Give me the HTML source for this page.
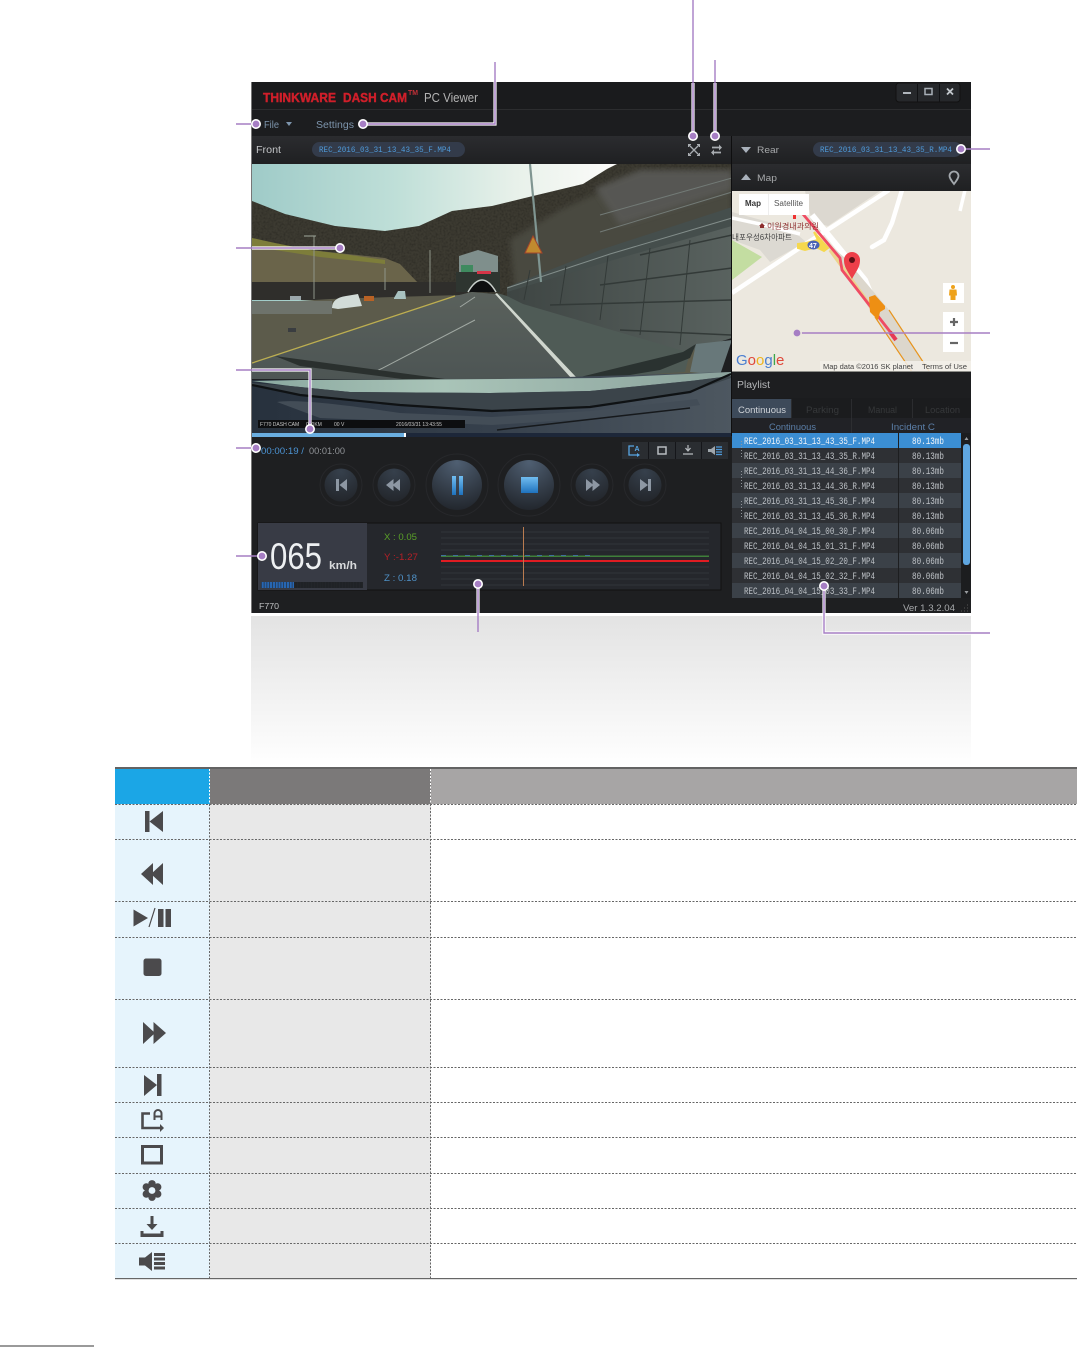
<!DOCTYPE html>
<html><head><meta charset="utf-8"><style>
html,body{margin:0;padding:0;background:#fff;width:1077px;height:1347px;overflow:hidden}
svg{display:block}
text{font-family:"Liberation Sans","Noto Sans CJK KR",sans-serif}
text.m,.m text{font-family:"Liberation Mono",monospace}
</style></head><body>
<svg width="1077" height="1347" viewBox="0 0 1077 1347" xmlns="http://www.w3.org/2000/svg">
<defs>
<linearGradient id="fade" x1="0" y1="0" x2="0" y2="1"><stop offset="0" stop-color="#e3e3e3"/><stop offset="1" stop-color="#fff"/></linearGradient>
<linearGradient id="sky" x1="0" y1="0" x2="1" y2="0"><stop offset="0" stop-color="#9fcbc8"/><stop offset=".3" stop-color="#bfdfd8"/><stop offset=".55" stop-color="#e8f1ea"/><stop offset=".75" stop-color="#fbfbf9"/><stop offset="1" stop-color="#fcfcfb"/></linearGradient>
<linearGradient id="wall" x1="0" y1="0" x2="1" y2="0"><stop offset="0" stop-color="#3e4543"/><stop offset="1" stop-color="#59625f"/></linearGradient>
<linearGradient id="road" x1="0" y1="0" x2="0" y2="1"><stop offset="0" stop-color="#5a615c"/><stop offset="1" stop-color="#4d5554"/></linearGradient>
<linearGradient id="dash" x1="0" y1="0" x2="1" y2="0"><stop offset="0" stop-color="#8aa89f"/><stop offset=".4" stop-color="#a9c4b8"/><stop offset="1" stop-color="#8ba29c"/></linearGradient>
<linearGradient id="dash2" x1="0" y1="0" x2="1" y2="0"><stop offset="0" stop-color="#27313d"/><stop offset=".5" stop-color="#36404c"/><stop offset="1" stop-color="#4d5760"/></linearGradient>
<linearGradient id="hdr" x1="0" y1="0" x2="0" y2="1"><stop offset="0" stop-color="#2b2c2f"/><stop offset="1" stop-color="#1f2022"/></linearGradient>
<radialGradient id="btn" cx=".5" cy=".1" r=".95"><stop offset="0" stop-color="#36404c"/><stop offset="1" stop-color="#22252a"/></radialGradient>
<radialGradient id="bbtn" cx=".5" cy=".05" r="1"><stop offset="0" stop-color="#4f5f72"/><stop offset="1" stop-color="#20242a"/></radialGradient>
<linearGradient id="blu" x1="0" y1="0" x2="0" y2="1"><stop offset="0" stop-color="#71bdf0"/><stop offset="1" stop-color="#1f72bd"/></linearGradient>
<filter id="noise" x="0" y="0" width="100%" height="100%"><feTurbulence type="fractalNoise" baseFrequency=".5" numOctaves="2" seed="4"/><feColorMatrix values="0 0 0 0 0  0 0 0 0 0  0 0 0 0 0  0 0 0 1.6 -.65"/><feComposite in2="SourceAlpha" operator="in"/></filter>
<filter id="soft" x="-5%" y="-5%" width="110%" height="110%"><feGaussianBlur stdDeviation="3"/></filter>
</defs>

<!-- fade area -->
<rect x="251" y="616" width="720" height="151" fill="url(#fade)"/>

<!-- window -->
<rect x="252" y="82" width="719" height="531" fill="#1e1f21"/>
<rect x="252" y="82" width="719" height="28" fill="#1a1b1d"/>
<rect x="252" y="109" width="719" height="1" fill="#2c2d2f"/>
<rect x="252" y="110" width="719" height="26" fill="#1c1d1f"/>
<rect x="252" y="136" width="479" height="28" fill="url(#hdr)"/>
<rect x="732" y="136" width="239" height="28" fill="url(#hdr)"/>
<rect x="732" y="164" width="239" height="27" fill="url(#hdr)"/>
<rect x="731" y="136" width="1" height="300" fill="#0e0e0f"/>
<g font-size="13" font-weight="700" fill="#d01f2a" stroke="#d01f2a" stroke-width=".4">
<text x="263" y="102" textLength="73" lengthAdjust="spacingAndGlyphs">THINKWARE</text>
<text x="343" y="102" textLength="64" lengthAdjust="spacingAndGlyphs">DASH CAM</text>
</g>
<text x="408" y="95" font-size="7" font-weight="700" fill="#c23038" textLength="10" lengthAdjust="spacingAndGlyphs">TM</text>
<text x="424" y="102" font-size="12.5" fill="#b4b4b4" textLength="54" lengthAdjust="spacingAndGlyphs">PC Viewer</text>
<text x="264" y="128" font-size="10" fill="#7d95ad" textLength="15" lengthAdjust="spacingAndGlyphs">File</text>
<path d="M286 122h6l-3 4z" fill="#7d95ad"/>
<text x="316" y="128" font-size="10" fill="#7d95ad" textLength="38" lengthAdjust="spacingAndGlyphs">Settings</text>

<!-- win btns -->
<rect x="896" y="83" width="64" height="19" rx="3" fill="#26282b" stroke="#111"/>
<path d="M917.500 84v18M939.500 84v18" stroke="#111214"/>
<rect x="903" y="92" width="8" height="2" fill="#b0b6bc"/>
<rect x="925" y="88.500" width="7" height="6" fill="none" stroke="#a9b0b8" stroke-width="1.500"/>
<path d="M947 88.500l6 6m0-6l-6 6" stroke="#c2c7cc" stroke-width="1.800"/>

<!-- front header -->
<text x="256" y="153" font-size="10" fill="#c2c4c6" textLength="25" lengthAdjust="spacingAndGlyphs">Front</text>
<rect x="312" y="142" width="153" height="15" rx="7.500" fill="#333b4a"/>
<text x="319" y="152" class="m" font-size="8.500" fill="#4f9ad9" textLength="132" lengthAdjust="spacingAndGlyphs">REC_2016_03_31_13_43_35_F.MP4</text>
<path d="M689 145l10 10m0-10l-10 10" stroke="#a9adb1" stroke-width="1.300"/>
<path d="M688.500 147v-2.500h2.500M699.500 147v-2.500h-2.500M688.500 153v2.500h2.500M699.500 153v2.500h-2.500" stroke="#a9adb1" stroke-width="1" fill="none"/>
<path d="M712 147.500h8M713 152.500h8" stroke="#a9adb1" stroke-width="1.800"/>
<path d="M719 144.500l3 3-3 3zM714 149.500l-3 3 3 3z" fill="#a9adb1"/>

<!-- video -->
<svg x="252" y="164" width="479" height="269" viewBox="252 164 479 269">
<rect x="252" y="164" width="480" height="150" fill="url(#sky)"/>
<path d="M252 201L285 214L335 226L385 231L419 226L452 211L492 206L533 196L583 184L607 169L617 164H732V300H252Z" fill="#3c3a31"/>
<path d="M252 201L285 214L335 226L385 231L419 226L452 211L492 206L533 196L583 184L607 169L617 164H732V300H252Z" fill="#000" filter="url(#noise)" opacity=".3"/>
<path d="M510 240L560 210L600 192L732 175V215L560 285L515 290Z" fill="#4a4841" filter="url(#soft)"/>
<path d="M595 188L640 170H732V190L620 225Z" fill="#565752" filter="url(#soft)"/>
<path d="M252 241L275 244L310 250L385 258L400 264L420 285L252 285Z" fill="#6a644a"/>
<path d="M252 238L275 243L310 250L350 255L385 260L385 264L320 257L275 250L252 246Z" fill="#7d7d3a"/>
<rect x="252" y="282" width="215" height="18" fill="#2f2e2b"/>
<rect x="470" y="262" width="30" height="30" fill="#333630"/>
<path d="M252 304L330 299L460 295L472 292L700 340V379H252Z" fill="#5c5b4b"/>
<rect x="252" y="301" width="80" height="13" fill="#6e736c"/>
<path d="M252 362L455 296L472 292L495 294L572 379H252Z" fill="url(#road)"/>
<path d="M252 363L455 296" stroke="#bdae50" stroke-width="1.300"/>
<path d="M375 372L475 320M460 307L475 297" stroke="#a0a8a2" stroke-width="1"/>
<path d="M495 294L572 379H578L497 293Z" fill="#cfd6ce"/>
<path d="M497 293L507 296L690 352L685 372L578 379Z" fill="#4f5b56"/>
<path d="M507 296L523 304L687 352L732 338V212L640 248L507 287Z" fill="url(#wall)"/>
<path d="M732 207L600 250L507 287V292L620 258L732 226Z" fill="#454e4c"/>
<path d="M732 218L610 254L507 288" stroke="#828d8a" stroke-width="1" fill="none"/>
<path d="M600 215L732 178M600 232L732 192" stroke="#727a76" stroke-width="1" fill="none"/>
<path d="M640 255L732 235M600 285L732 268M550 305L732 300M620 330L732 335" stroke="#333a38" stroke-width="1.500" fill="none"/>
<path d="M524 300L530 270M560 305L566 266M600 320L608 256M640 335L650 248M680 345L690 240" stroke="#333a38" stroke-width="1" fill="none"/>
<path d="M572 379L683 352L696 344L690 358L660 370L600 380Z" fill="#2a3230"/>
<path d="M732 340L720 375L690 372L696 344Z" fill="#68787a"/>
<path d="M275 356L445 379L410 380L300 366Z" fill="#2a302e"/>
<!-- poles, sign, tunnel -->
<path d="M530 164L541 282" stroke="#7f9591" stroke-width="2.200"/>
<path d="M533 236L542 253H525Z" fill="#c08a2f" stroke="#a4452a"/>
<path d="M459 256L478 250L498 256V272H459Z" fill="#7f8f8c"/>
<rect x="461" y="265" width="12" height="8" fill="#3f8a5f"/>
<rect x="456" y="272" width="44" height="20" fill="#2e3530"/>
<path d="M468 292Q483 270 496 292Z" fill="#0e0f10"/>
<path d="M468 292Q482 268 496 292" stroke="#c9d0cc" stroke-width="1.500" fill="none"/>
<rect x="477" y="271" width="14" height="3" fill="#d63548"/>
<path d="M314 236L314 299M385 268V290M430 250V293" stroke="#8e9488" stroke-width="1"/>
<path d="M304 236H316" stroke="#a0a89c" stroke-width="1"/>
<path d="M332 308Q332 298 346 296L358 294L362 306L338 309Z" fill="#d2dcd8"/>
<rect x="364" y="296" width="10" height="5" fill="#b86225"/>
<path d="M394 298L398 291H405L406 299H394Z" fill="#a8c2c0"/>
<rect x="290" y="296" width="11" height="4" fill="#9ba7ab"/>
<rect x="288" y="328" width="8" height="4" fill="#3a3d40"/>
<!-- dash -->
<path d="M252 380L500 379L731 372V433H252Z" fill="url(#dash2)"/>
<path d="M252 381L300 380L500 379L600 378L731 372V376L690 381L590 391L490 393L350 392L290 386Z" fill="url(#dash)"/>
<path d="M252 383L290 386L350 392L490 393L590 391L690 381L731 376V378L690 392L590 407L492 411L400 405L300 395L252 385Z" fill="#3b444a"/>
<path d="M252 385L300 395L400 405L492 411L590 407L690 392L731 374" stroke="#0f1214" stroke-width="2.200" fill="none"/>
<path d="M277 402Q300 398 400 413L492 417L590 411L697 399L700 405L600 418L492 425L320 418Z" fill="#434d57"/>
<path d="M497 430L690 408" stroke="#16191c" stroke-width="1.500"/>
<rect x="258" y="420" width="207" height="8" fill="#0d0e10"/>
<text x="260" y="426" font-size="5" fill="#c8c8c8">F770 DASH CAM</text>
<text x="306" y="426" font-size="5" fill="#c8c8c8">000KM</text>
<text x="334" y="426" font-size="5" fill="#c8c8c8">00 V</text>
<text x="396" y="426" font-size="5" fill="#c8c8c8">2016/03/31 13:43:55</text>
</svg>

<!-- progress -->
<rect x="252" y="433" width="479" height="4" fill="#1d2739"/>
<rect x="252" y="433" width="152" height="4" fill="#6aaee0"/>
<rect x="404" y="433" width="2" height="4" fill="#fff"/>
<text x="261" y="454" font-size="9.500" fill="#4c94d4" textLength="43" lengthAdjust="spacingAndGlyphs">00:00:19 /</text>
<text x="309" y="454" font-size="9.500" fill="#8f9296" textLength="36" lengthAdjust="spacingAndGlyphs">00:01:00</text>

<!-- small btns -->
<rect x="622" y="442" width="106" height="17" fill="#2a2d31"/>
<path d="M648.500 442v17M675.500 442v17M701.500 442v17" stroke="#15161a"/>
<path d="M634 446h-5v9h9" stroke="#58a6e4" stroke-width="1.300" fill="none"/>
<path d="M637 453l3 2-3 2z" fill="#58a6e4"/>
<text x="634.500" y="451" font-size="7" font-weight="700" fill="#58a6e4">A</text>
<rect x="658" y="447" width="8" height="7" fill="none" stroke="#b8bcc0" stroke-width="1.500"/>
<path d="M688 445v5m-2.500-2l2.500 3 2.500-3M683 454h10" stroke="#b8bcc0" stroke-width="1.200" fill="none"/>
<path d="M708 449h3l4-3v9l-4-3h-3z" fill="#9fa6ac"/>
<path d="M716 447h6M716 449.500h6M716 452h6M716 454.500h6" stroke="#4f9ad9" stroke-width="1.200"/>

<!-- controls -->
<g fill="none" stroke="#27282b"><circle cx="341" cy="485" r="21"/><circle cx="394" cy="485" r="21"/><circle cx="457" cy="485" r="31"/><circle cx="529" cy="485" r="31"/><circle cx="592" cy="485" r="21"/><circle cx="645" cy="485" r="21"/></g>
<circle cx="341" cy="485" r="16.500" fill="url(#btn)"/><circle cx="394" cy="485" r="16.500" fill="url(#btn)"/>
<circle cx="592" cy="485" r="16.500" fill="url(#btn)"/><circle cx="645" cy="485" r="16.500" fill="url(#btn)"/>
<circle cx="457" cy="485" r="25" fill="url(#bbtn)"/><circle cx="529" cy="485" r="25" fill="url(#bbtn)"/>
<g fill="#8d97a3"><path d="M336 479h3v12h-3zM339.500 485l7.500-6v12z"/><path d="M386 485l7.500-6v12zM392.500 485l7.500-6v12z"/><path d="M586 479l7.500 6-7.500 6zM592.500 479l7.500 6-7.500 6z"/><path d="M640 479l8 6-8 6zM648 479h3v12h-3z"/></g>
<rect x="452" y="476" width="4" height="19" fill="url(#blu)"/><rect x="459" y="476" width="4" height="19" fill="url(#blu)"/>
<rect x="521" y="477" width="17" height="16" fill="url(#blu)"/>

<!-- graph -->
<rect x="258" y="523" width="463" height="67" fill="#25272c" stroke="#111"/>
<rect x="258" y="523" width="109" height="67" fill="#383b45"/>
<text x="270" y="569" font-size="37" fill="#eef0f2" textLength="52" lengthAdjust="spacingAndGlyphs">065</text>
<text x="329" y="569" font-size="11" font-weight="700" fill="#d8dadc" textLength="28" lengthAdjust="spacingAndGlyphs">km/h</text>
<rect x="261" y="582" width="102" height="6" fill="#1f2226"/>
<rect x="261" y="582" width="33" height="6" fill="#2766b2"/>
<path d="M261 585H363" stroke="#25272c" stroke-width="6" stroke-dasharray=".6 2.200"/>
<text x="384" y="540" font-size="9.500" fill="#5aa128" textLength="33" lengthAdjust="spacingAndGlyphs">X : 0.05</text>
<text x="384" y="560" font-size="9.500" fill="#b52027" textLength="34" lengthAdjust="spacingAndGlyphs">Y :-1.27</text>
<text x="384" y="581" font-size="9.500" fill="#4f91c7" textLength="33" lengthAdjust="spacingAndGlyphs">Z : 0.18</text>
<path d="M441 532h268M441 538h268M441 544h268M441 550h268M441 567h268M441 573h268M441 579h268M441 585h268" stroke="#31343a"/>
<rect x="441" y="555.500" width="268" height="1.500" fill="#3f7f3a"/>
<path d="M441 555.500H590" stroke="#3f6f9a" stroke-dasharray="5 7"/>
<rect x="441" y="560" width="268" height="2" fill="#e01c22"/>
<rect x="523" y="527" width="1" height="59" fill="#b97b50"/>
<text x="259" y="609" font-size="8.500" fill="#bfc1c3" textLength="20" lengthAdjust="spacingAndGlyphs">F770</text>

<!-- rear & map header -->
<path d="M741 147h10l-5 6z" fill="#a9b1bb"/>
<text x="757" y="153" font-size="9.500" fill="#a6a8aa" textLength="22" lengthAdjust="spacingAndGlyphs">Rear</text>
<rect x="813" y="142" width="149" height="15" rx="7.500" fill="#333b4a"/>
<text x="820" y="152" class="m" font-size="8.500" fill="#4f9ad9" textLength="132" lengthAdjust="spacingAndGlyphs">REC_2016_03_31_13_43_35_R.MP4</text>
<path d="M746 174l5 6h-10z" fill="#a9b1bb"/>
<text x="757" y="181" font-size="9.500" fill="#a6a8aa" textLength="20" lengthAdjust="spacingAndGlyphs">Map</text>
<path d="M954 184c-3-4-4.500-6-4.500-8a4.500 4.500 0 0 1 9 0c0 2-1.500 4-4.500 8z" fill="none" stroke="#a3a8ad" stroke-width="1.800"/>

<!-- map -->
<svg x="732" y="191" width="239" height="180" viewBox="732 191 239 180">
<rect x="732" y="191" width="239" height="180" fill="#ece8df"/>
<path d="M805 191L880 191L828 226L812 222Z" fill="#dcd8d0"/>
<path d="M732 212L790 228L806 242L770 262L760 250L732 240Z" fill="#dcd9d2"/>
<path d="M732 240L762 257L732 280Z" fill="#c3dda1"/>
<path d="M732 293L804 245L832 227L889 190" stroke="#fff" stroke-width="4.500" fill="none"/>
<path d="M812 215L865 280L871 295" stroke="#fff" stroke-width="6" fill="none"/>
<path d="M732 218L760 224L800 234" stroke="#fff" stroke-width="3.500" fill="none"/>
<path d="M872 247L884 240L892 223L902 190" stroke="#fff" stroke-width="4.500" fill="none" stroke-linecap="round"/>
<path d="M965 190L960 211" stroke="#fff" stroke-width="3.500" fill="none"/>
<path d="M822 238L875 317L912 372H929L889 310L845 258Z" fill="#dcd7cc"/>
<path d="M830 250L872 308" stroke="#ecd48e" stroke-width="3.500"/>
<path d="M798 244L806 243L818 240L814 232L828 248L824 251L816 247L805 250L798 248Z" fill="#f5d84e" stroke="#f5d84e" stroke-width="2"/>
<ellipse cx="813.500" cy="245" rx="6" ry="4.500" fill="#4a62b6"/>
<text x="809" y="248" font-size="7" font-weight="700" fill="#fff">47</text>
<path d="M802 213L840 258L842 270L895 338" stroke="#ef4c63" stroke-width="2.800" fill="none"/>
<path d="M890 332L896 340" stroke="#e63a55" stroke-width="4"/>
<path d="M869 297L875 295L885 306L885 309L880 312L878 320L870 312Z" fill="#ee8f13"/>
<path d="M875 317L912 372M889 310L929 371" stroke="#e7941d" stroke-width="1.200"/>
<path d="M852 279c-5-9-8-12-8-19a8 8 0 0 1 16 0c0 7-3 10-8 19z" fill="#ed3f49"/>
<circle cx="852" cy="260" r="3" fill="#5b1015"/>
<rect x="739" y="194" width="70" height="21" fill="#fff"/>
<path d="M768.500 194v21" stroke="#eee"/>
<text x="745" y="206" font-size="8" font-weight="700" fill="#333">Map</text>
<text x="774" y="206" font-size="8" fill="#555" textLength="29" lengthAdjust="spacingAndGlyphs">Satellite</text>
<rect x="793" y="215" width="3" height="4" fill="#e33"/>
<text x="767" y="229" font-size="8" fill="#8d2e2e" textLength="52" lengthAdjust="spacingAndGlyphs">이원경내과의원</text>
<text x="732" y="240" font-size="8" fill="#444" textLength="60" lengthAdjust="spacingAndGlyphs">내포우성6차아파트</text>
<path d="M760 225h4v3h-4zM759 226l3-3 3 3z" fill="#8d2e2e"/>
<rect x="943" y="283" width="21" height="20" fill="#fff"/>
<path d="M953 285a2 2 0 1 1 0 4 2 2 0 1 1 0-4zM949.500 289.500h7l.5 6h-1.500v4.500h-5v-4.500h-1.500z" fill="#eea21b"/>
<rect x="943" y="312" width="21" height="40" fill="#fff"/>
<path d="M950 322h8m-4-4v8" stroke="#666" stroke-width="2.200"/>
<path d="M950 343h8" stroke="#666" stroke-width="2.200"/>
<text x="736" y="365" font-size="15" fill="#4a7ed0">G<tspan fill="#e0483a">o</tspan><tspan fill="#eeb420">o</tspan><tspan fill="#4a7ed0">g</tspan><tspan fill="#3da64a">l</tspan><tspan fill="#e0483a">e</tspan></text>
<rect x="820" y="361" width="151" height="10" fill="#f3f0ea" opacity=".85"/>
<text x="823" y="369" font-size="7" fill="#444" textLength="90" lengthAdjust="spacingAndGlyphs">Map data ©2016 SK planet</text>
<text x="922" y="369" font-size="7" fill="#444" textLength="45" lengthAdjust="spacingAndGlyphs">Terms of Use</text>
</svg>
<rect x="732" y="371" width="239" height="1.500" fill="#8d8d88"/>

<!-- playlist -->
<rect x="732" y="372" width="239" height="27" fill="#1d1e20"/>
<text x="737" y="388" font-size="10" fill="#b5b7b9" textLength="33" lengthAdjust="spacingAndGlyphs">Playlist</text>
<rect x="732" y="398" width="239" height="20" fill="#1b1c1e"/>
<rect x="732" y="399" width="59" height="19" fill="#3d4a5a"/>
<path d="M851.500 399v19M912.500 399v19M791.500 399v19" stroke="#2b2c2f"/>
<text x="738" y="413" font-size="9" fill="#cfd3d8" textLength="48" lengthAdjust="spacingAndGlyphs">Continuous</text>
<text x="806" y="413" font-size="9" fill="#36383a" textLength="33" lengthAdjust="spacingAndGlyphs">Parking</text>
<text x="868" y="413" font-size="9" fill="#36383a" textLength="29" lengthAdjust="spacingAndGlyphs">Manual</text>
<text x="925" y="413" font-size="9" fill="#36383a" textLength="35" lengthAdjust="spacingAndGlyphs">Location</text>
<rect x="732" y="418" width="239" height="15" fill="#212226"/>
<path d="M851.500 418v15" stroke="#2d2e31"/>
<text x="769" y="430" font-size="9" fill="#5b7fa8" textLength="47" lengthAdjust="spacingAndGlyphs">Continuous</text>
<text x="891" y="430" font-size="9" fill="#5b7fa8" textLength="44" lengthAdjust="spacingAndGlyphs">Incident C</text>
<rect x="732" y="433" width="229" height="165" fill="#2e3034"/>
<rect x="732" y="433" width="229" height="15" fill="#3b8ed3"/>
<rect x="732" y="463" width="229" height="15" fill="#3b4148"/>
<rect x="732" y="493" width="229" height="15" fill="#3b4148"/>
<rect x="732" y="523" width="229" height="15" fill="#3b4148"/>
<rect x="732" y="553" width="229" height="15" fill="#3b4148"/>
<rect x="732" y="583" width="229" height="15" fill="#3b4148"/>
<rect x="898" y="433" width="1" height="165" fill="#1d1e20"/>
<g class="m" font-size="10" fill="#bcc0c5">
<text x="744" y="444" fill="#f2f6fa" textLength="131" lengthAdjust="spacingAndGlyphs">REC_2016_03_31_13_43_35_F.MP4</text>
<text x="744" y="459" textLength="131" lengthAdjust="spacingAndGlyphs">REC_2016_03_31_13_43_35_R.MP4</text>
<text x="744" y="474" textLength="131" lengthAdjust="spacingAndGlyphs">REC_2016_03_31_13_44_36_F.MP4</text>
<text x="744" y="489" textLength="131" lengthAdjust="spacingAndGlyphs">REC_2016_03_31_13_44_36_R.MP4</text>
<text x="744" y="504" textLength="131" lengthAdjust="spacingAndGlyphs">REC_2016_03_31_13_45_36_F.MP4</text>
<text x="744" y="519" textLength="131" lengthAdjust="spacingAndGlyphs">REC_2016_03_31_13_45_36_R.MP4</text>
<text x="744" y="534" textLength="131" lengthAdjust="spacingAndGlyphs">REC_2016_04_04_15_00_30_F.MP4</text>
<text x="744" y="549" textLength="131" lengthAdjust="spacingAndGlyphs">REC_2016_04_04_15_01_31_F.MP4</text>
<text x="744" y="564" textLength="131" lengthAdjust="spacingAndGlyphs">REC_2016_04_04_15_02_20_F.MP4</text>
<text x="744" y="579" textLength="131" lengthAdjust="spacingAndGlyphs">REC_2016_04_04_15_02_32_F.MP4</text>
<text x="744" y="594" textLength="131" lengthAdjust="spacingAndGlyphs">REC_2016_04_04_15_03_33_F.MP4</text>
<text x="912" y="444" fill="#f2f6fa" textLength="32" lengthAdjust="spacingAndGlyphs">80.13mb</text>
<text x="912" y="459" textLength="32" lengthAdjust="spacingAndGlyphs">80.13mb</text>
<text x="912" y="474" textLength="32" lengthAdjust="spacingAndGlyphs">80.13mb</text>
<text x="912" y="489" textLength="32" lengthAdjust="spacingAndGlyphs">80.13mb</text>
<text x="912" y="504" textLength="32" lengthAdjust="spacingAndGlyphs">80.13mb</text>
<text x="912" y="519" textLength="32" lengthAdjust="spacingAndGlyphs">80.13mb</text>
<text x="912" y="534" textLength="32" lengthAdjust="spacingAndGlyphs">80.06mb</text>
<text x="912" y="549" textLength="32" lengthAdjust="spacingAndGlyphs">80.06mb</text>
<text x="912" y="564" textLength="32" lengthAdjust="spacingAndGlyphs">80.06mb</text>
<text x="912" y="579" textLength="32" lengthAdjust="spacingAndGlyphs">80.06mb</text>
<text x="912" y="594" textLength="32" lengthAdjust="spacingAndGlyphs">80.06mb</text>
</g>
<path d="M741.500 441v16M741.500 471v16M741.500 501v16" stroke="#8f949a" stroke-dasharray="1 2"/>
<rect x="961" y="433" width="10" height="165" fill="#1c1d1f"/>
<rect x="963" y="444" width="7" height="121" rx="3" fill="#5fa6e0"/>
<path d="M966.500 437l-2 3h4zM966.500 594l-2-3h4z" fill="#9a9da0"/>
<text x="903" y="611" font-size="9.500" fill="#a8aaac" textLength="52" lengthAdjust="spacingAndGlyphs">Ver 1.3.2.04</text>
<path d="M961 611h8M964 608h5M967 605h2" stroke="#555" stroke-dasharray="1 2"/>

<!-- window left edge -->
<rect x="251" y="82" width="1" height="531" fill="#777"/>

<!-- callouts -->
<g fill="none" stroke-linejoin="miter">
<g stroke="#fff" stroke-width="3.200">
<path d="M363 124H495V62"/><path d="M252 370H310V429"/><path d="M252 248H340"/><path d="M478 584V614"/><path d="M824 586V633H971"/><path d="M693 136V83M715 136V83"/>
</g>
<g stroke="#a67ec4" stroke-width="1.400">
<path d="M236 124H256"/><path d="M363 124H495V62"/><path d="M693 136V0"/><path d="M715 136V60"/><path d="M961 149H990"/>
<path d="M236 248H340"/><path d="M797 333H990"/><path d="M236 370H310V429"/><path d="M236 448H256"/><path d="M236 556H262"/><path d="M478 584V632"/><path d="M824 586V633H990"/>
</g>
</g>
<g fill="#a67ec4" stroke="#fff" stroke-width="1.600">
<circle cx="256" cy="124" r="4.200"/><circle cx="363" cy="124" r="4.200"/><circle cx="693" cy="136" r="4.200"/><circle cx="715" cy="136" r="4.200"/><circle cx="961" cy="149" r="4.200"/><circle cx="340" cy="248" r="4.200"/><circle cx="797" cy="333" r="4.200" stroke="#ece8df"/><circle cx="310" cy="429" r="4.200"/><circle cx="256" cy="448" r="4.200"/><circle cx="262" cy="556" r="4.200"/><circle cx="478" cy="584" r="4.200"/><circle cx="824" cy="586" r="4.200"/>
</g>

<!-- table -->
<rect x="115" y="769" width="95" height="35" fill="#1ba6e6"/>
<rect x="210" y="769" width="221" height="35" fill="#7b7979"/>
<rect x="431" y="769" width="646" height="35" fill="#a7a5a5"/>
<rect x="115" y="767" width="962" height="2" fill="#636363"/>
<rect x="115" y="804" width="95" height="474" fill="#e6f4fc"/>
<rect x="210" y="804" width="221" height="474" fill="#e8e8e8"/>
<g stroke="#666" stroke-width="1" stroke-dasharray="2 1.500">
<path d="M115 804.500H1077M115 839.500H1077M115 901.500H1077M115 937.500H1077M115 999.500H1077M115 1067.500H1077M115 1102.500H1077M115 1137.500H1077M115 1173.500H1077M115 1208.500H1077M115 1243.500H1077"/>
<path d="M209.500 804V1278M430.500 804V1278"/>
<path d="M209.500 769V804M430.500 769V804" stroke="#fff"/>
</g>
<rect x="115" y="1278" width="962" height="1.200" fill="#666"/>

<g fill="#4b4a4c">
<path d="M145 811h4.500v21H145zM149.500 821.500L163 811v21z"/>
<path d="M141 874L153 863V885ZM151 874L163 863V885Z"/>
<path d="M133.500 909.500L148 918L133.500 926.500ZM158 909h5.500v18H158zM165.500 909h5.500v18h-5.500z"/>
<path d="M149 927L155 908" stroke="#4b4a4c" stroke-width="1.200"/>
<rect x="143.500" y="958.500" width="18" height="17.500" rx="2.500"/>
<path d="M143 1022L155 1033L143 1044ZM153.500 1022L166 1033L153.500 1044Z"/>
<path d="M144 1075L157 1085L144 1096ZM157 1074h4.500v22H157z"/>
<path d="M150 1113.500H142.500V1128H160" fill="none" stroke="#4b4a4c" stroke-width="2.600"/>
<path d="M160 1124l4 4-4 4z"/>
<path d="M154.500 1120v-6.500a3.500 3.500 0 0 1 7 0v6.500M154.500 1116.500h7" fill="none" stroke="#4b4a4c" stroke-width="2"/>
<rect x="142.500" y="1146.500" width="19" height="16.500" fill="none" stroke="#4b4a4c" stroke-width="3"/>
<circle cx="152" cy="1183.800" r="3.700"/><circle cx="152" cy="1197.200" r="3.700"/><circle cx="146.300" cy="1187" r="3.700"/><circle cx="157.700" cy="1187" r="3.700"/><circle cx="146.300" cy="1194" r="3.700"/><circle cx="157.700" cy="1194" r="3.700"/>
<circle cx="152" cy="1190.500" r="7"/>
<circle cx="152" cy="1190.500" r="3.400" fill="#e6f4fc"/>
<path d="M150.500 1216h3v8h4l-5.500 6-5.500-6h4zM140.500 1231h3v2.500h17v-2.500h3v6h-23z"/>
<path d="M139 1257.500h6l7-5.500v19l-7-5.500h-6zM154 1253h11v3h-11zM154 1257.500h11v3h-11zM154 1262h11v3h-11zM154 1266.500h11v3h-11z"/>
</g>

<rect x="0" y="1345" width="94" height="2" fill="#9a9a9a"/>
</svg>
</body></html>
